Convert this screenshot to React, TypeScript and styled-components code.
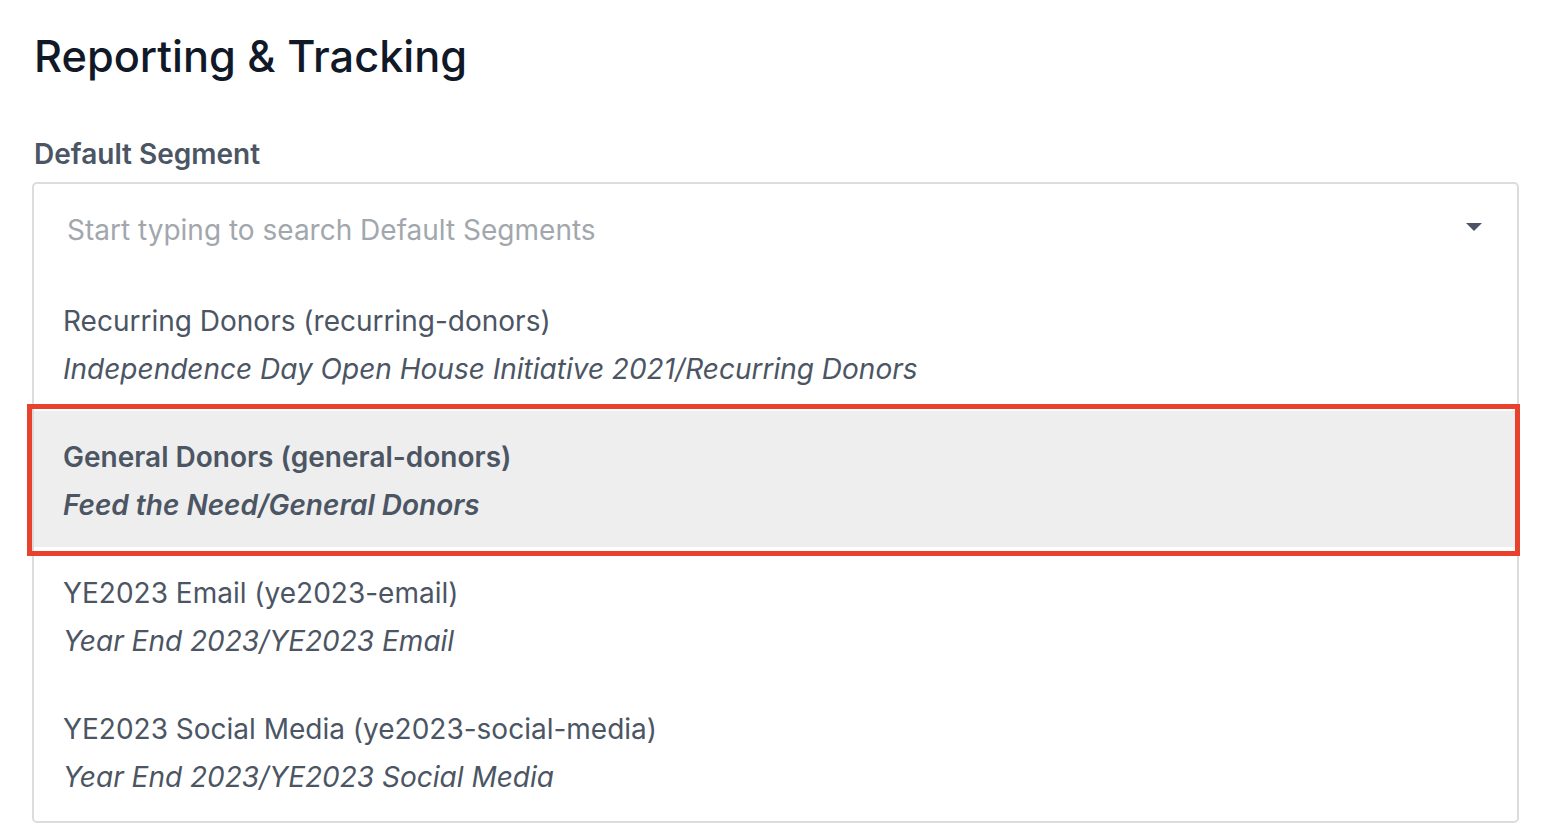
import styled, { createGlobalStyle } from "styled-components";

const GlobalStyle = createGlobalStyle`
  body {
    margin: 0;
    background: #ffffff;
    font-family: Inter, "Noto Sans", sans-serif;
  }
`;

const Page = styled.div`
  padding: 26px 30px 0 32px;
`;

const Title = styled.h1`
  margin: 0 0 0 2px;
  font-size: 43.3px;
  line-height: 60px;
  font-weight: 500;
  color: #111827;
`;

const Label = styled.div`
  margin: 52px 0 12px 2px;
  font-size: 28px;
  line-height: 32px;
  font-weight: 600;
  color: #4b5563;
`;

const Select = styled.div`
  border: 2px solid #dcdcdc;
  border-radius: 5px;
  width: 1487px;
  padding-bottom: 2px;
  box-sizing: border-box;
  position: relative;
`;

const SearchRow = styled.div`
  height: 91px;
  display: flex;
  align-items: center;
  justify-content: space-between;
  padding: 0 35px 0 33px;
`;

const Placeholder = styled.span`
  font-size: 28px;
  color: #a2a7ad;
`;

const Caret = styled.span`
  width: 0;
  height: 0;
  border-left: 8px solid transparent;
  border-right: 8px solid transparent;
  border-top: 8px solid #4b5563;
  margin-top: -6px;
`;

const Option = styled.div<{ $active?: boolean }>`
  padding: 22px 29px 18px;
  background: ${(p) => (p.$active ? "#eeeeee" : "transparent")};
  color: #4b5563;
  font-size: 28px;
  line-height: 48px;
  font-weight: ${(p) => (p.$active ? 600 : 400)};
`;

const OptionName = styled.div``;

const OptionPath = styled.div`
  font-style: italic;
`;

const Highlight = styled.div`
  position: absolute;
  left: -7px;
  right: -3px;
  top: 220px;
  height: 152px;
  border: 5px solid #e8412c;
  box-sizing: border-box;
  pointer-events: none;
`;

const options = [
  {
    name: "Recurring Donors (recurring-donors)",
    path: "Independence Day Open House Initiative 2021/Recurring Donors",
  },
  {
    name: "General Donors (general-donors)",
    path: "Feed the Need/General Donors",
    active: true,
  },
  { name: "YE2023 Email (ye2023-email)", path: "Year End 2023/YE2023 Email" },
  {
    name: "YE2023 Social Media (ye2023-social-media)",
    path: "Year End 2023/YE2023 Social Media",
  },
];

const App = () => (
  <>
    <GlobalStyle />
    <Page>
      <Title>Reporting &amp; Tracking</Title>
      <Label>Default Segment</Label>
      <Select>
        <SearchRow>
          <Placeholder>Start typing to search Default Segments</Placeholder>
          <Caret />
        </SearchRow>
        {options.map((o) => (
          <Option key={o.name} $active={o.active}>
            <OptionName>{o.name}</OptionName>
            <OptionPath>{o.path}</OptionPath>
          </Option>
        ))}
        <Highlight />
      </Select>
    </Page>
  </>
);

export default App;
